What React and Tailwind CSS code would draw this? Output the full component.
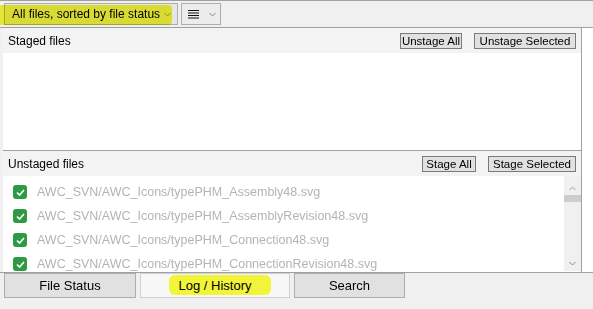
import React from "react";

const unstaged = [
  "AWC_SVN/AWC_Icons/typePHM_Assembly48.svg",
  "AWC_SVN/AWC_Icons/typePHM_AssemblyRevision48.svg",
  "AWC_SVN/AWC_Icons/typePHM_Connection48.svg",
  "AWC_SVN/AWC_Icons/typePHM_ConnectionRevision48.svg",
];

function Chevron({ className = "", color = "#8a8a8a" }) {
  return (
    <svg width="7" height="5" viewBox="0 0 7 5" className={`shrink-0 ${className}`}>
      <path d="M0.5 1 L3.5 4 L6.5 1" fill="none" stroke={color} strokeWidth="1" />
    </svg>
  );
}

function SmallButton({ children, w }) {
  return (
    <button
      className={`h-[16px] ${w} border border-[#7a7a7a] bg-[#e1e1e1] text-[11.5px] leading-[14px] text-black flex items-center justify-center whitespace-nowrap`}
    >
      {children}
    </button>
  );
}

function CheckBox() {
  return (
    <span className="w-[14px] h-[14px] rounded-[3px] bg-[#2e9b44] flex items-center justify-center shrink-0">
      <svg width="9" height="7" viewBox="0 0 9 7">
        <path d="M1 3.5 L3.5 6 L8 1" fill="none" stroke="#fff" strokeWidth="1.6" />
      </svg>
    </span>
  );
}

export default function App() {
  return (
    <div className="w-[593px] h-[309px] overflow-hidden bg-[#f0f0f0] font-['Liberation_Sans',Arial,sans-serif] text-[12px] text-black flex flex-col">
      {/* toolbar */}
      <div className="relative h-[28px] border-t border-b border-[#a0a0a0] flex items-center gap-[3px] pl-[4px]">
        <div className="h-[22px] w-[174px] shrink-0 border border-[#adadad] bg-[#e5e5e5] flex items-center pl-[7px] pr-[6px] justify-between text-[12px] whitespace-nowrap">
          <span>All files, sorted by file status</span>
          <Chevron color="#9a9a40" />
        </div>
        <div className="h-[22px] w-[40px] shrink-0 border border-[#adadad] bg-[#ececec] flex items-center pl-[6px] gap-[10px]">
          <svg width="11" height="9" viewBox="0 0 11 9">
            <path d="M0 0.5 H11 M0 3 H11 M0 5.5 H11 M0 8 H11" stroke="#111" strokeWidth="1" />
          </svg>
          <Chevron />
        </div>
        {/* marker highlight over the filter box */}
        <span className="absolute left-0 top-[4px] w-[172px] h-[20px] bg-[#f2f43a] mix-blend-multiply rounded-r-[4px] pointer-events-none" />
      </div>

      <div className="flex h-[244px]">
        <div className="ml-[3px] w-[579px] border-r border-[#a0a0a0] flex flex-col bg-white">
          {/* staged */}
          <div className="h-[25px] bg-[#f3f3f3] flex items-center justify-between pl-[5px] pr-[5px]">
            <span>Staged files</span>
            <div className="flex gap-[12px]">
              <SmallButton w="w-[62px]">Unstage All</SmallButton>
              <SmallButton w="w-[102px]">Unstage Selected</SmallButton>
            </div>
          </div>
          <div className="h-[98px] bg-white border-b border-[#a0a0a0]" />

          {/* unstaged */}
          <div className="h-[25px] bg-[#f3f3f3] flex items-center justify-between pl-[5px] pr-[5px]">
            <span>Unstaged files</span>
            <div className="flex gap-[12px]">
              <SmallButton w="w-[54px]">Stage All</SmallButton>
              <SmallButton w="w-[88px]">Stage Selected</SmallButton>
            </div>
          </div>
          <div className="h-[95px] flex bg-white">
            <div className="flex-1 overflow-hidden pt-[4px]">
              {unstaged.map((f) => (
                <div key={f} className="h-[24px] flex items-center gap-[10px] pl-[10px]">
                  <CheckBox />
                  <span className="text-[12.5px] text-[#b4b4b4] blur-[0.6px] whitespace-nowrap">{f}</span>
                </div>
              ))}
            </div>
            <div className="w-[17px] bg-[#f0f0f0] flex flex-col items-center pt-[10px] pb-[5px]">
              <svg width="7" height="5" viewBox="0 0 7 5">
                <path d="M0.5 4 L3.5 1 L6.5 4" fill="none" stroke="#a0a0a0" strokeWidth="1" />
              </svg>
              <div className="mt-[4px] w-[17px] h-[7px] bg-[#cdcdcd]" />
              <div className="flex-1" />
              <Chevron />
            </div>
          </div>
        </div>
        <div className="flex-1 bg-white" />
      </div>

      {/* tabs */}
      <div className="h-[37px] border-t border-[#a0a0a0] flex items-start gap-[4px] pl-[4px] text-[13px]">
        <div className="h-[25px] w-[132px] border border-[#adadad] bg-[#e1e1e1] flex items-center justify-center">
          File Status
        </div>
        <div className="relative h-[25px] w-[150px] border border-[#d0d0d0] bg-[#f7f7f7] flex items-center justify-center">
          <span className="absolute left-[28px] top-[1px] w-[102px] h-[20px] rounded-[6px] bg-[#f2f43a]" />
          <span className="relative">Log / History</span>
        </div>
        <div className="h-[25px] w-[111px] border border-[#adadad] bg-[#e1e1e1] flex items-center justify-center">
          Search
        </div>
      </div>
    </div>
  );
}
